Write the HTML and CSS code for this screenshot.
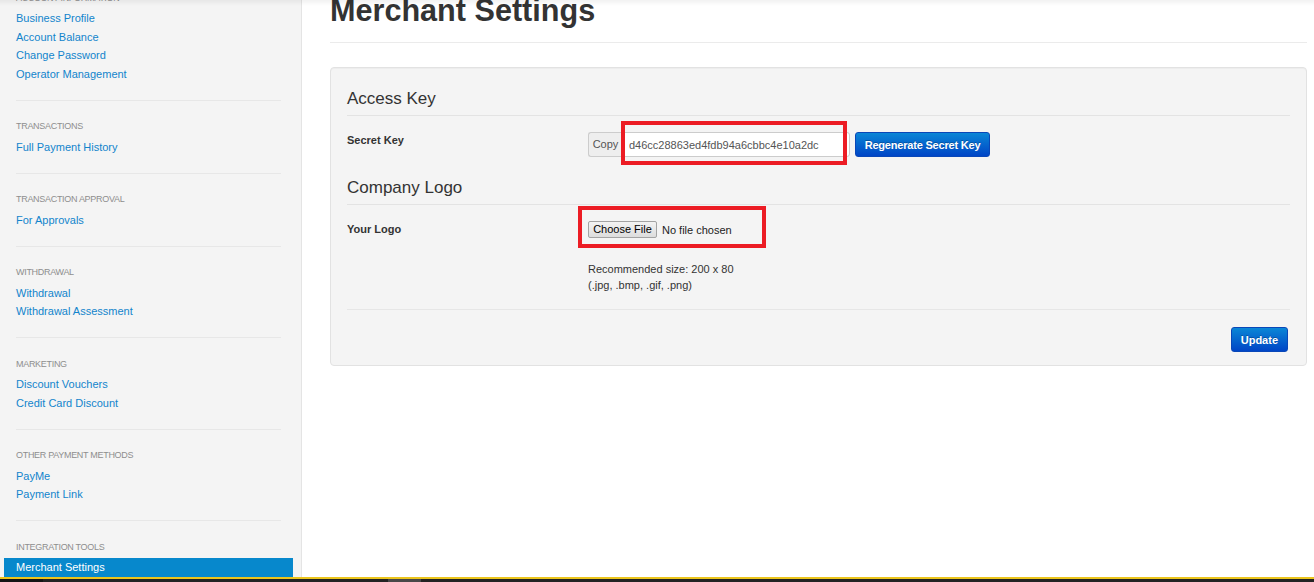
FILE: index.html
```html
<!DOCTYPE html>
<html lang="en">
<head>
  <meta charset="UTF-8">
  <title>Merchant Settings</title>
  <link rel="stylesheet" href="styles.css">
</head>
<body>
  <div class="page">
    <div class="layout">
      <!-- Left navigation -->
      <aside class="sidebar">
        <div class="nav-section">
          <div class="nav-header">Account Information</div>
          <a href="#" class="nav-link">Business Profile</a>
          <a href="#" class="nav-link">Account Balance</a>
          <a href="#" class="nav-link">Change Password</a>
          <a href="#" class="nav-link">Operator Management</a>
        </div>
        <div class="nav-section">
          <div class="nav-header">Transactions</div>
          <a href="#" class="nav-link">Full Payment History</a>
        </div>
        <div class="nav-section">
          <div class="nav-header">Transaction Approval</div>
          <a href="#" class="nav-link">For Approvals</a>
        </div>
        <div class="nav-section">
          <div class="nav-header">Withdrawal</div>
          <a href="#" class="nav-link">Withdrawal</a>
          <a href="#" class="nav-link">Withdrawal Assessment</a>
        </div>
        <div class="nav-section">
          <div class="nav-header">Marketing</div>
          <a href="#" class="nav-link">Discount Vouchers</a>
          <a href="#" class="nav-link">Credit Card Discount</a>
        </div>
        <div class="nav-section">
          <div class="nav-header">Other Payment Methods</div>
          <a href="#" class="nav-link">PayMe</a>
          <a href="#" class="nav-link">Payment Link</a>
        </div>
        <div class="nav-section">
          <div class="nav-header">Integration Tools</div>
          <a href="#" class="nav-link active">Merchant Settings</a>
        </div>
      </aside>

      <!-- Main content -->
      <main class="content">
        <h1 class="page-title">Merchant Settings</h1>

        <form class="well">
          <div class="fieldset">
            <h3 class="legend">Access Key</h3>
            <div class="form-row">
              <label class="control-label">Secret Key</label>
              <div class="controls">
                <div class="input-group">
                  <span class="addon">Copy</span>
                  <input class="key-input" type="text" value="d46cc28863ed4fdb94a6cbbc4e10a2dc" readonly>
                  <button type="button" class="btn btn-primary btn-regen">Regenerate Secret Key</button>
                  <span class="highlight hl-key"></span>
                </div>
              </div>
            </div>
          </div>

          <div class="fieldset">
            <h3 class="legend">Company Logo</h3>
            <div class="form-row">
              <label class="control-label">Your Logo</label>
              <div class="controls">
                <div class="file-control">
                  <span class="file-btn">Choose File</span>
                  <span class="file-status">No file chosen</span>
                  <span class="highlight hl-file"></span>
                </div>
                <p class="help-text">Recommended size: 200 x 80<br>(.jpg, .bmp, .gif, .png)</p>
              </div>
            </div>
          </div>

          <div class="form-actions">
            <button type="button" class="btn btn-primary">Update</button>
          </div>
        </form>
      </main>
    </div>

    <div class="footer-bar">
      <span class="bar-edge"></span>
      <span class="bar-thumb"></span>
    </div>
  </div>
</body>
</html>
```

FILE: styles.css
```css
html, body {
  margin: 0;
  height: 100%;
  overflow: hidden;
}

body {
  font-family: "Liberation Sans", Arial, sans-serif;
  font-size: 11px;
  color: #333;
  background: #fff;
}

/* faint shadow of the fixed top bar */
body::before {
  content: "";
  position: fixed;
  top: 0;
  left: 0;
  right: 0;
  height: 6px;
  background: linear-gradient(rgba(0, 0, 0, 0.05), rgba(0, 0, 0, 0));
  z-index: 5;
}

/* page is scrolled down a little */
.page {
  margin-top: -28px;
}

.layout {
  display: flex;
  height: 605px;
}

/* Sidebar */
.sidebar {
  box-sizing: border-box;
  width: 302px;
  flex-shrink: 0;
  padding: 0 20px 0 16px;
  background: #f4f4f4;
  border-right: 1px solid #e4e4e4;
}

.nav-section {
  padding: 19.5px 0 16.5px;
  border-top: 1px solid #e7e7e7;
}

.nav-section:first-child {
  border-top: 0;
}

.nav-header {
  font-size: 9px;
  line-height: 12px;
  text-transform: uppercase;
  letter-spacing: -0.3px;
  color: #8e8e8e;
  margin-bottom: 5.5px;
}

.nav-link {
  display: block;
  font-size: 11px;
  line-height: 18.5px;
  color: #1284cc;
  text-decoration: none;
}

.nav-link.active {
  margin: 0 -12px;
  padding-left: 12px;
  background: #0788cc;
  color: #fff;
}

/* Main column */
.content {
  flex: 1;
  padding: 20px 7px 0 28px;
}

.page-title {
  margin: 0;
  padding-bottom: 14px;
  font-size: 30.6px;
  line-height: 36px;
  font-weight: bold;
  color: #333;
  border-bottom: 1px solid #ebebeb;
}

.well {
  margin: 24px 0 0;
  padding: 18px 16px 13px;
  background: #f4f4f4;
  border: 1px solid #e2e2e2;
  border-radius: 4px;
  box-shadow: inset 0 1px 1px rgba(0, 0, 0, 0.03);
}

.fieldset {
  margin-bottom: 18px;
}

.legend {
  margin: 0 0 16px;
  padding: 1px 0 4px;
  font-size: 17px;
  line-height: 24px;
  font-weight: normal;
  color: #333;
  border-bottom: 1px solid #e3e3e3;
}

.form-row {
  display: flex;
  align-items: flex-start;
}

.control-label {
  width: 241px;
  flex-shrink: 0;
  font-weight: bold;
  line-height: 16px;
  color: #333;
}

.controls {
  flex: 1;
}

/* Secret key input */
.input-group {
  position: relative;
  display: flex;
  height: 25px;
}

.addon {
  box-sizing: border-box;
  width: 34px;
  height: 25px;
  line-height: 23px;
  text-align: center;
  color: #555;
  background: #eee;
  border: 1px solid #ccc;
  border-right: 0;
  border-radius: 3px 0 0 3px;
}

.key-input {
  box-sizing: border-box;
  width: 228px;
  height: 25px;
  margin: 0;
  padding: 0 6px;
  font-family: "Liberation Sans", Arial, sans-serif;
  font-size: 11px;
  color: #555;
  background: #fff;
  border: 1px solid #ccc;
  border-radius: 0 3px 3px 0;
  outline: none;
}

.btn {
  box-sizing: border-box;
  height: 25px;
  padding: 0 9px;
  font-family: "Liberation Sans", Arial, sans-serif;
  font-size: 11px;
  font-weight: bold;
  cursor: pointer;
  border-radius: 3px;
}

.btn-primary {
  color: #fff;
  background: linear-gradient(#0a86d6, #0045c6);
  border: 1px solid #0947b8;
  text-shadow: 0 -1px 0 rgba(0, 0, 0, 0.25);
}

.btn-regen {
  width: 135px;
  margin-left: 5px;
  padding: 0;
  letter-spacing: -0.2px;
}

/* Logo upload */
.file-control {
  position: relative;
  display: flex;
  align-items: center;
  height: 17px;
}

.file-btn {
  box-sizing: border-box;
  width: 69px;
  height: 17px;
  line-height: 15px;
  text-align: center;
  color: #000;
  background: linear-gradient(#f3f3f3, #dddddd);
  border: 1px solid #a3a3a3;
  border-radius: 2px;
}

.file-status {
  margin-left: 5px;
  color: #222;
}

.help-text {
  margin: 23px 0 0;
  line-height: 16px;
  color: #333;
}

.form-actions {
  margin-top: -2px;
  padding: 17px 2px 0 0;
  text-align: right;
  border-top: 1px solid #e6e6e6;
}

/* red annotation boxes */
.highlight {
  position: absolute;
  box-sizing: border-box;
  border: 4px solid #ec1c24;
  pointer-events: none;
}

.hl-key {
  left: 33px;
  top: -11px;
  width: 226px;
  height: 44px;
}

.hl-file {
  left: -10px;
  top: -15px;
  width: 188px;
  height: 42px;
}

/* bottom strip */
.footer-bar {
  display: flex;
  height: 4px;
  background: #232323;
  border-top: 2px solid #ecc51c;
}

.bar-edge {
  width: 43px;
  background: #141414;
}

.bar-thumb {
  width: 33px;
  margin-left: 345px;
  background: #484848;
}
```
